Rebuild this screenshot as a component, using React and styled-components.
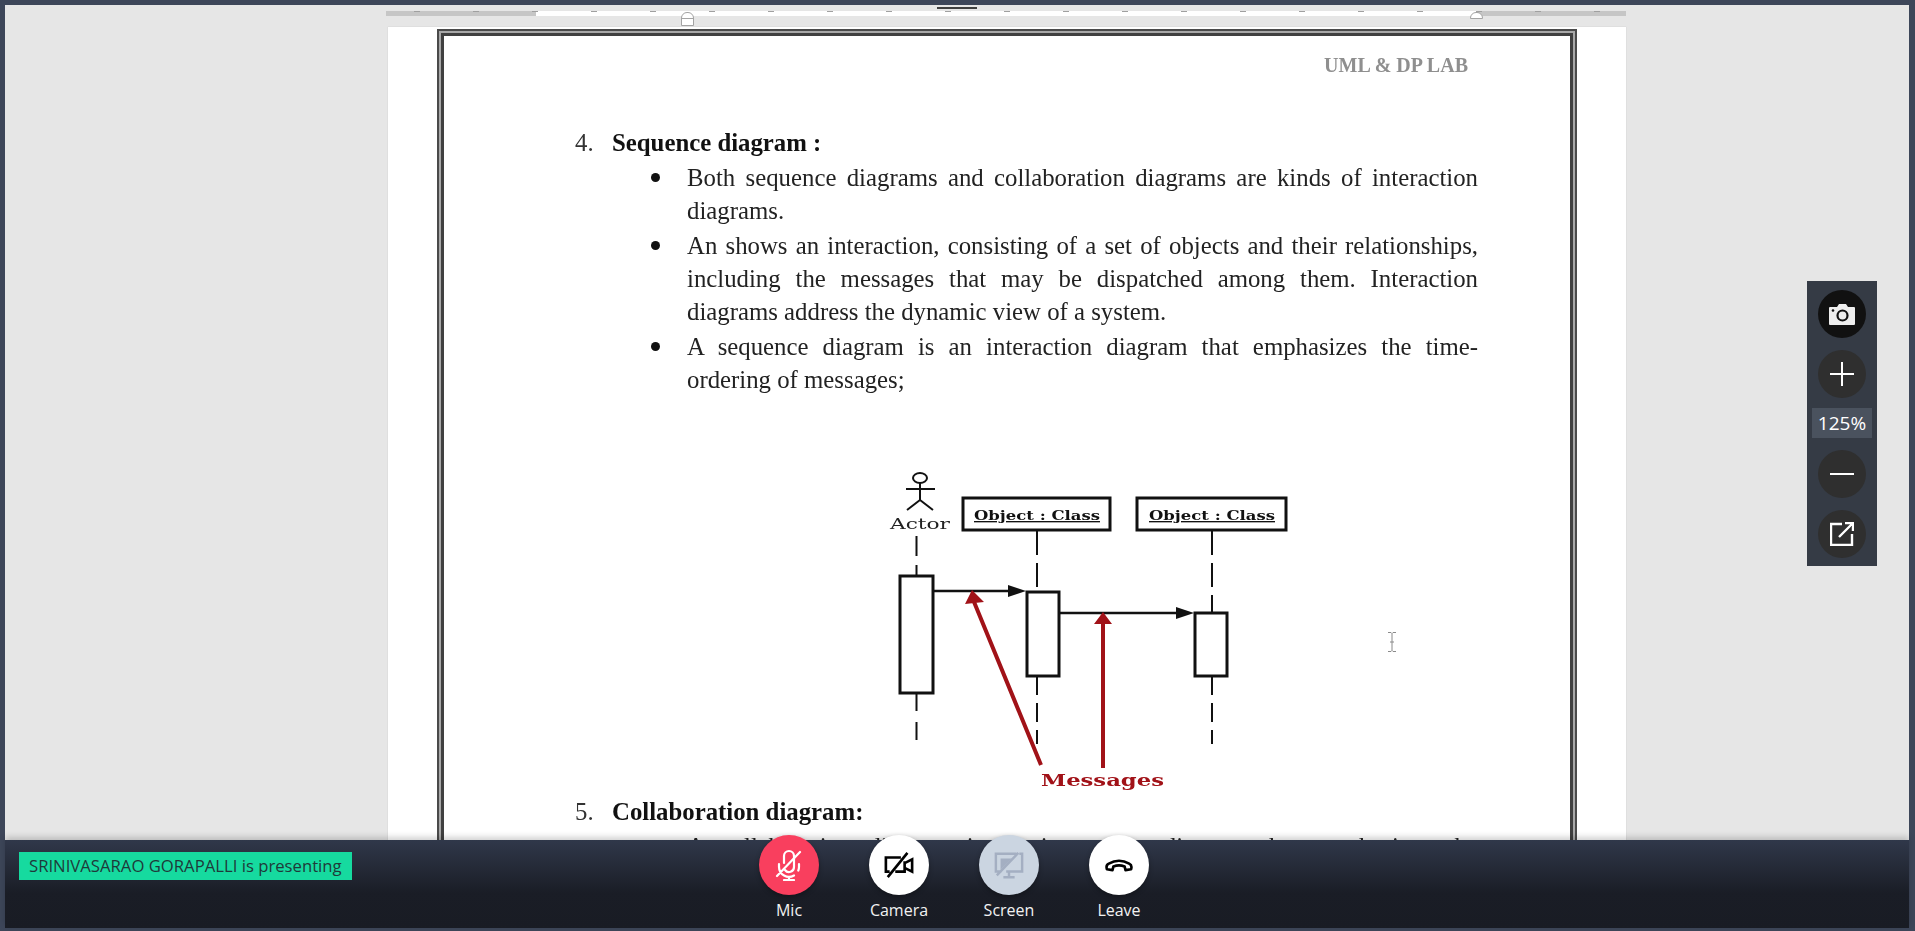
import React from 'react'
import styled, { createGlobalStyle } from 'styled-components'

const GlobalStyle = createGlobalStyle`
  html, body {
    margin: 0;
    padding: 0;
    height: 100%;
    overflow: hidden;
    background: #3d4659;
  }
`
const Window = styled.div`
  width: 1915px;
  height: 931px;
  box-sizing: border-box;
  padding: 5px 6px 3px 5px;
  background: #3d4659;
  display: flex;
  flex-direction: column;
  position: relative;
  overflow: hidden;
`
const Viewer = styled.div`
  flex: 1;
  min-height: 0;
  background: #e6e6e6;
  overflow: hidden;
  position: relative;
`
const TabStrip = styled.div`
  height: 4px;
  padding-left: 932px;
`
const TabMark = styled.div`
  width: 40px;
  height: 2px;
  margin-top: 2px;
  background: #3f3f3f;
`
const Ruler = styled.div`
  height: 5px;
  width: 1240px;
  margin-left: 381px;
  display: flex;
  position: relative;
  &::after {
    content: '';
    position: absolute;
    left: 28px;
    right: 0;
    top: 0;
    height: 1px;
    background: repeating-linear-gradient(90deg, #a0a0a0 0, #a0a0a0 6px, transparent 6px, transparent 59px);
  }
`
const RulerPart = styled.div`
  flex: ${p => p.$grow};
  background: ${p => (p.$margin ? '#c6c6c6' : '#ffffff')};
`
const RulerHandle = styled.div`
  position: absolute;
  z-index: 1;
  left: ${p => p.$left}px;
  top: 1px;
  width: 13px;
  height: ${p => p.$height}px;
  box-sizing: border-box;
  border: 1px solid #a3a3a3;
  border-radius: 6px 6px 0 0;
  background: ${p => (p.$split ? 'linear-gradient(#fff 45%, #a3a3a3 45%, #a3a3a3 53%, #fff 53%)' : '#fff')};
`
const Page = styled.div`
  width: 1238px;
  margin: 11px 0 0 383px;
  padding: 2px 49px 0 49px;
  box-sizing: border-box;
  background: #fff;
  box-shadow: 0 0 1px #bdbdbd;
`
const PageFrame = styled.div`
  border: 2px solid #4a4a4a;
  box-shadow: inset 0 0 0 2px #a8a8a8, inset 0 0 0 5px #404040;
  padding: 5px 97px 0 136px;
  height: 840px;
  box-sizing: border-box;
  font-family: 'Liberation Serif', 'Times New Roman', serif;
  color: #222;
  font-size: 24.8px;
`
const PageContent = styled.div`
  filter: blur(0.35px);
`
const RunningHead = styled.div`
  text-align: right;
  margin-right: 10px;
  padding-top: 17px;
  height: 90px;
  box-sizing: border-box;
  font-size: 20px;
  line-height: 24px;
  font-weight: bold;
  color: #8f8f8f;
`
const Heading = styled.div`
  display: flex;
  line-height: 33px;
  font-weight: bold;
  color: #111;
`
const HeadingNum = styled.span`
  width: 37px;
  font-weight: normal;
  color: #333;
`
const BulletList = styled.ul`
  list-style: none;
  margin: 2px 0 0;
  padding: 0 0 0 112px;
`
const BulletItem = styled.li`
  line-height: 33px;
  margin-bottom: 2px;
  text-align: justify;
  position: relative;
  &::before {
    content: '';
    position: absolute;
    left: -36px;
    top: 12px;
    width: 9px;
    height: 9px;
    border-radius: 50%;
    background: #111;
  }
`
const DiagramBox = styled.div`
  margin: 54px 0 0 285px;
  height: 345px;
`
const HiddenLine = styled.div`
  padding-left: 112px;
  margin-top: 2px;
  line-height: 33px;
  text-align: justify;
  text-align-last: justify;
`
const ZoomPanel = styled.div`
  position: absolute;
  right: 32px;
  top: 276px;
  width: 70px;
  height: 285px;
  background: #353b45;
  display: flex;
  flex-direction: column;
  align-items: center;
  padding-top: 9px;
  box-sizing: border-box;
`
const ZoomButton = styled.button`
  width: 48px;
  height: 48px;
  border: none;
  padding: 0;
  border-radius: 50%;
  background: ${p => (p.$dark ? '#111111' : '#2f2f2f')};
  margin-top: ${p => p.$top || 0}px;
  display: flex;
  align-items: center;
  justify-content: center;
`
const ZoomValue = styled.div`
  width: 60px;
  height: 30px;
  margin-top: 10px;
  margin-bottom: 12px;
  background: #4a525e;
  color: #fff;
  font-family: 'Open Sans', sans-serif;
  font-size: 19px;
  line-height: 30px;
  text-align: center;
`
const TextCursor = styled.svg`
  position: absolute;
  left: 1382px;
  top: 627px;
`
const BottomBar = styled.div`
  height: 88px;
  flex-shrink: 0;
  position: relative;
  background: linear-gradient(#30384a, #1a1d26 60%, #191c24);
  box-shadow: 0 -3px 6px rgba(0, 0, 0, 0.18);
`
const Presenter = styled.div`
  position: absolute;
  left: 14px;
  top: 12px;
  width: 333px;
  height: 28px;
  padding-left: 10px;
  box-sizing: border-box;
  background: #16da9f;
  color: #1f3a3a;
  font-family: 'Open Sans', sans-serif;
  font-size: 16.7px;
  line-height: 28px;
  white-space: nowrap;
`
const Controls = styled.div`
  position: absolute;
  left: 739px;
  top: -5px;
  display: flex;
  gap: 20px;
`
const Control = styled.div`
  width: 90px;
  display: flex;
  flex-direction: column;
  align-items: center;
`
const ControlButton = styled.button`
  width: 60px;
  height: 60px;
  padding: 0;
  border: none;
  border-radius: 50%;
  background: ${p => p.$bg};
  display: flex;
  align-items: center;
  justify-content: center;
  box-shadow: 0 2px 5px rgba(0, 0, 0, 0.3);
`
const ControlLabel = styled.span`
  margin-top: 5px;
  color: #f2f2f2;
  font-family: 'Open Sans', sans-serif;
  font-size: 16px;
  line-height: 20px;
`

const SequenceDiagram = () => (
  <svg width="440" height="345" viewBox="0 0 440 345">
    <g fill="none" stroke="#111" strokeWidth="2">
      <ellipse cx="60" cy="28" rx="7" ry="5" />
      <path d="M60 33v17M46 39h29M60 50l-13 10M60 50l13 10" />
    </g>
    <text x="60" y="79" textAnchor="middle" fontFamily="DejaVu Serif" fontSize="15" fill="#222" textLength="60" lengthAdjust="spacingAndGlyphs">Actor</text>
    <g fill="#fff" stroke="#111" strokeWidth="3">
      <rect x="103" y="48" width="147" height="32" />
      <rect x="277" y="48" width="149" height="32" />
    </g>
    <g fontFamily="DejaVu Serif" fontSize="13.500" fontWeight="bold" fill="#111" textDecoration="underline">
      <text x="114" y="70" textLength="126" lengthAdjust="spacingAndGlyphs">Object : Class</text>
      <text x="289" y="70" textLength="126" lengthAdjust="spacingAndGlyphs">Object : Class</text>
    </g>
    <g stroke="#111" strokeWidth="2" fill="none" strokeDasharray="20 9">
      <path d="M56.500 86V126" />
      <path d="M56.500 243V296" strokeDasharray="18 11" />
      <path d="M177 81V141" strokeDasharray="24 8" />
      <path d="M177 226V294" strokeDasharray="19 8" />
      <path d="M352 81V162" strokeDasharray="24 8" />
      <path d="M352 226V294" strokeDasharray="19 8" />
    </g>
    <g fill="#fff" stroke="#111" strokeWidth="3">
      <rect x="40" y="126" width="33" height="117" />
      <rect x="167" y="142" width="32" height="84" />
      <rect x="335" y="163" width="32" height="63" />
    </g>
    <path d="M74 141H150M199 163H318" stroke="#111" strokeWidth="2.400" fill="none" />
    <path d="M148 135L166 141L148 147ZM316 157L334 163L316 169Z" fill="#111" />
    <path d="M181 315L112 147M243 318V167" stroke="#a11218" strokeWidth="4" fill="none" />
    <path d="M112 140L105 154L124 152ZM243 162L234 174H252Z" fill="#a11218" />
    <text x="181" y="336" fontFamily="DejaVu Serif" fontSize="17" fontWeight="bold" fill="#a11218" textLength="123" lengthAdjust="spacingAndGlyphs">Messages</text>
  </svg>
)

const CameraIcon = () => (
  <svg width="28" height="24" viewBox="0 0 28 24">
    <path d="M1 6a1 1 0 0 1 1-1h7l2-3h7l2 3h6a1 1 0 0 1 1 1v16a1 1 0 0 1-1 1H2a1 1 0 0 1-1-1Z" fill="#eee" />
    <circle cx="14.500" cy="13.500" r="5" fill="none" stroke="#111" strokeWidth="2.200" />
    <circle cx="5" cy="8.500" r="1.300" fill="#111" />
  </svg>
)

const PlusIcon = () => (
  <svg width="24" height="24" viewBox="0 0 24 24">
    <path d="M0 12h24M12 0v24" stroke="#fff" strokeWidth="2" />
  </svg>
)

const MinusIcon = () => (
  <svg width="24" height="24" viewBox="0 0 24 24">
    <path d="M0 12h24" stroke="#fff" strokeWidth="2" />
  </svg>
)

const ExternalIcon = () => (
  <svg width="24" height="24" viewBox="0 0 24 24" fill="none" stroke="#fff" strokeWidth="2.400">
    <path d="M12 2H1v21h21V12M9 15 23 1M15 1h8v8" />
  </svg>
)

const MicIcon = () => (
  <svg width="32" height="32" viewBox="0 0 32 32" fill="none" stroke="#fff" strokeWidth="2.200" strokeLinecap="round">
    <path d="M11 14V7a5 5 0 0 1 10 0v11a5 5 0 0 1-9 3" />
    <path d="M6 15v3a10 10 0 0 0 15 8.500M26 15v3a10 10 0 0 1-.7 3.500M16 28v2M11 31h10M4 27 27 3" />
  </svg>
)

const VideoIcon = () => (
  <svg width="30" height="30" viewBox="0 0 32 32" fill="none" stroke="#000" strokeWidth="2.800">
    <path d="M18 8H2v15h4M12 23h10V12M22 14l8-4v13l-8-4M4 29 25 3" />
  </svg>
)

const ScreenIcon = () => (
  <svg width="30" height="30" viewBox="0 0 32 32" fill="none" stroke="#a4afc2" strokeWidth="2.600">
    <path d="M24 4H2v19h6M13 23h17V4h-3M16 23v5M10 29h12M3 27 26 3" />
    <path d="M7 9h12L7 21Z" fill="#a4afc2" stroke="none" />
  </svg>
)

const PhoneIcon = () => (
  <svg width="28" height="13" viewBox="0 0 30 14" fill="none" stroke="#000" strokeWidth="2.800" strokeLinejoin="round">
    <path d="M2 11c-1-3 0-5 2-6 7-4 15-4 22 0 2 1 3 3 2 6l-6 1-1-4c-4-1.500-8-1.500-12 0l-1 4Z" />
  </svg>
)

const rulerParts = [
  { grow: 150, margin: true },
  { grow: 940, margin: false },
  { grow: 150, margin: true }
]

const bullets = [
  'Both sequence diagrams and collaboration diagrams are kinds of interaction diagrams.',
  'An shows an interaction, consisting of a set of objects and their relationships, including the messages that may be dispatched among them. Interaction diagrams address the dynamic view of a system.',
  'A sequence diagram is an interaction diagram that emphasizes the time-ordering of messages;'
]

const controls = [
  { label: 'Mic', bg: '#f93f5e', icon: <MicIcon /> },
  { label: 'Camera', bg: '#ffffff', icon: <VideoIcon /> },
  { label: 'Screen', bg: '#cbd5e1', icon: <ScreenIcon /> },
  { label: 'Leave', bg: '#ffffff', icon: <PhoneIcon /> }
]

export default function App() {
  return (
    <Window>
      <GlobalStyle />
      <Viewer>
        <TabStrip>
          <TabMark />
        </TabStrip>
        <Ruler>
          {rulerParts.map((part, i) => (
            <RulerPart key={i} $grow={part.grow} $margin={part.margin} />
          ))}
          <RulerHandle $left={295} $height={14} $split />
          <RulerHandle $left={1084} $height={7} />
        </Ruler>
        <Page>
          <PageFrame>
            <PageContent>
              <RunningHead>UML &amp; DP LAB</RunningHead>
              <Heading>
                <HeadingNum>4.</HeadingNum>Sequence diagram :
              </Heading>
              <BulletList>
                {bullets.map((text, i) => (
                  <BulletItem key={i}>{text}</BulletItem>
                ))}
              </BulletList>
              <DiagramBox>
                <SequenceDiagram />
              </DiagramBox>
              <Heading>
                <HeadingNum>5.</HeadingNum>Collaboration diagram:
              </Heading>
              <HiddenLine>A collaboration diagram is an interaction diagram that emphasizes the</HiddenLine>
            </PageContent>
          </PageFrame>
        </Page>
        <ZoomPanel>
          <ZoomButton $dark><CameraIcon /></ZoomButton>
          <ZoomButton $top={12}><PlusIcon /></ZoomButton>
          <ZoomValue>125%</ZoomValue>
          <ZoomButton><MinusIcon /></ZoomButton>
          <ZoomButton $top={12}><ExternalIcon /></ZoomButton>
        </ZoomPanel>
        <TextCursor width="10" height="20" viewBox="0 0 10 20" fill="none" stroke="#8a8a8a" strokeWidth="1">
          <path d="M1 .5h3l1 1 1-1h3M5 1.500v17M1 19.500h3l1-1 1 1h3M3 10h4" />
        </TextCursor>
      </Viewer>
      <BottomBar>
        <Presenter>SRINIVASARAO GORAPALLI is presenting</Presenter>
        <Controls>
          {controls.map(c => (
            <Control key={c.label}>
              <ControlButton $bg={c.bg}>{c.icon}</ControlButton>
              <ControlLabel>{c.label}</ControlLabel>
            </Control>
          ))}
        </Controls>
      </BottomBar>
    </Window>
  )
}
